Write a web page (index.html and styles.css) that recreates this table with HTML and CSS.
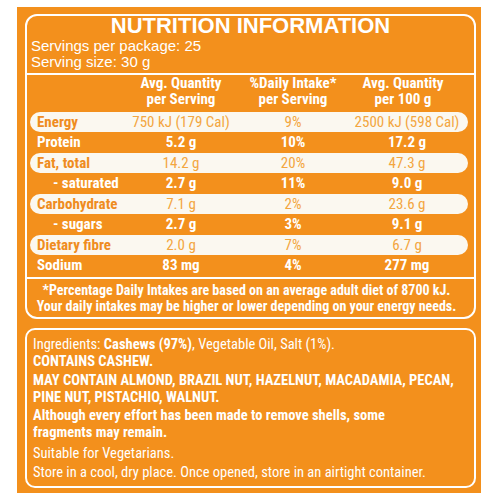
FILE: index.html
```html
<!DOCTYPE html>
<html lang="en">
<head>
<meta charset="utf-8">
<title>Nutrition Information</title>
<link rel="stylesheet" href="styles.css">
</head>
<body>
<div class="panel">
  <section class="nutrition">
    <h1 class="title">NUTRITION INFORMATION</h1>
    <div class="servings">
      <div>Servings per package: 25</div>
      <div>Serving size: 30 g</div>
    </div>
    <div class="table">
      <div class="row head">
        <span></span>
        <span>Avg. Quantity<br>per Serving</span>
        <span>%Daily Intake*<br>per Serving</span>
        <span class="h3">Avg. Quantity<br>per 100 g</span>
      </div>
      <div class="row pill"><span class="lbl">Energy</span><span>750 kJ (179 Cal)</span><span>9%</span><span>2500 kJ (598 Cal)</span></div>
      <div class="row band"><span class="lbl">Protein</span><span>5.2 g</span><span>10%</span><span>17.2 g</span></div>
      <div class="row pill"><span class="lbl">Fat, total</span><span>14.2 g</span><span>20%</span><span>47.3 g</span></div>
      <div class="row band"><span class="lbl sub">- saturated</span><span>2.7 g</span><span>11%</span><span>9.0 g</span></div>
      <div class="row pill"><span class="lbl">Carbohydrate</span><span>7.1 g</span><span>2%</span><span>23.6 g</span></div>
      <div class="row band"><span class="lbl sub">- sugars</span><span>2.7 g</span><span>3%</span><span>9.1 g</span></div>
      <div class="row pill"><span class="lbl">Dietary fibre</span><span>2.0 g</span><span>7%</span><span>6.7 g</span></div>
      <div class="row band"><span class="lbl">Sodium</span><span>83 mg</span><span>4%</span><span>277 mg</span></div>
    </div>
    <p class="footnote">*Percentage Daily Intakes are based on an average adult diet of 8700 kJ.<br>Your daily intakes may be higher or lower depending on your energy needs.</p>
  </section>
  <section class="ingredients">
    <p class="p1">Ingredients: <b>Cashews (97%)</b>, Vegetable Oil, Salt (1%).</p>
    <p class="p2 bold">CONTAINS CASHEW.</p>
    <p class="p3 bold">MAY CONTAIN ALMOND, BRAZIL NUT, HAZELNUT, MACADAMIA, PECAN,<br>PINE NUT, PISTACHIO, WALNUT.</p>
    <p class="p4 bold">Although every effort has been made to remove shells, some<br>fragments may remain.</p>
    <p class="p5">Suitable for Vegetarians.</p>
    <p class="p6">Store in a cool, dry place. Once opened, store in an airtight container.</p>
  </section>
</div>
</body>
</html>
```
FILE: styles.css
```css
html, body {
  margin: 0;
  padding: 0;
  background: #ffffff;
}
.panel {
  box-sizing: border-box;
  margin: 7px 0 0 17px;
  width: 464px;
  height: 486px;
  padding: 7px 5px 0 8px;
  background: #f3901c;
  color: #ffffff;
  font-family: "Liberation Sans", Arial, sans-serif;
}
.nutrition {
  box-sizing: border-box;
  height: 305px;
  border: 2px solid #ffffff;
  border-radius: 12px;
}
.title {
  margin: 0;
  font-size: 22px;
  line-height: 20px;
  font-weight: 900;
  text-align: center;
}
.servings {
  margin-top: 2px;
  padding-left: 4px;
  font-size: 15px;
  line-height: 16px;
}
.table, .footnote, .ingredients {
  font-family: "Roboto Condensed", "Open Sans", "Liberation Sans", sans-serif;
  font-stretch: 75%;
}
.table {
  margin-top: 3px;
  border-top: 2px solid #ffffff;
  font-size: 15px;
}
.row {
  display: grid;
  grid-template-columns: 88px 112px 112px 116px;
  padding-left: 7px;
  margin: 0 6px 0 3px;
  align-items: center;
  white-space: nowrap;
}
.row span {
  text-align: center;
}
.row .lbl {
  text-align: left;
  font-weight: bold;
}
.row .sub {
  padding-left: 16px;
}
.head {
  font-weight: bold;
  line-height: 16px;
  margin-bottom: 5px;
}
.head .h3 {
  padding-right: 8px;
}
.pill {
  height: 20px;
  line-height: 20px;
  background: #fbf8f0;
  border-radius: 10px;
  color: #f3a640;
}
.pill .lbl {
  color: #ef8c20;
}
.band {
  height: 21px;
  line-height: 21px;
  font-weight: bold;
}
.footnote {
  margin: 1px 0 0;
  padding: 3px 8px 0 0;
  border-top: 2px solid #ffffff;
  font-weight: bold;
  font-size: 14px;
  line-height: 16px;
  text-align: center;
  white-space: nowrap;
}
.ingredients {
  box-sizing: border-box;
  margin-top: 9px;
  height: 160px;
  border: 2px solid #ffffff;
  border-radius: 10px;
  padding: 6px 0 0 6px;
  font-size: 14.5px;
  line-height: 17px;
  white-space: nowrap;
}
.ingredients p {
  margin: 0;
}
.ingredients .bold {
  font-weight: bold;
}
.ingredients .p2 { margin-top: 0; }
.ingredients .p3 { margin-top: 2px; }
.ingredients .p4 { margin-top: 1px; }
.ingredients .p5 { margin-top: 4px; }
.ingredients .p6 { margin-top: 2px; }
```
